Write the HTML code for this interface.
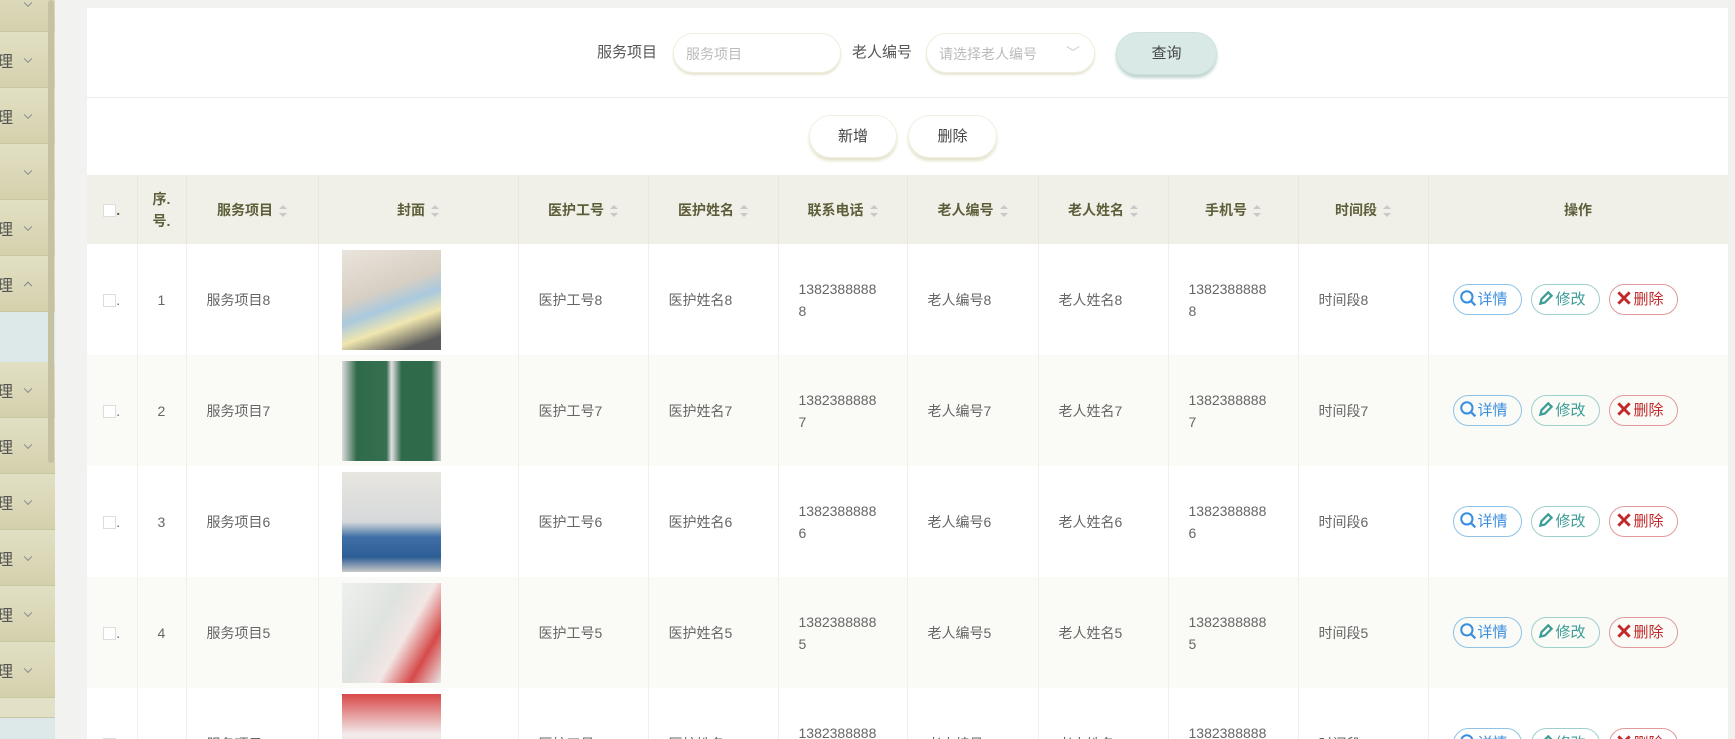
<!DOCTYPE html>
<html><head><meta charset="utf-8"><style>
*{box-sizing:border-box;margin:0;padding:0}
html{width:1735px;height:739px;overflow:hidden}
body{width:1735px;height:739px;overflow:hidden;background:#f2f2f0;font-family:"Liberation Sans","Noto Sans CJK SC",sans-serif;font-size:14px;color:#666;position:relative}
.sb{position:absolute;left:0;top:0;width:55px;height:739px;background:#dcdbbd;overflow:hidden}
.it{position:absolute;left:0;width:55px;background:linear-gradient(#e2e0c4,#d3d1ac);border-bottom:1px solid #c9c7a2;color:#555;font-size:16px}
.it span{position:absolute;left:-3px;top:50%;transform:translateY(-50%)}
.it i{position:absolute;left:25px;top:50%;width:6px;height:6px;border-right:1px solid #888;border-bottom:1px solid #888;transform:translateY(-70%) rotate(45deg)}
.it i.up{transform:translateY(-20%) rotate(225deg)}
.lb{position:absolute;left:0;width:55px;background:#dde9e8}
.panel{position:absolute;left:87px;top:8px;width:1641px;height:731px;background:#fff;overflow:hidden}
.search{height:90px;border-bottom:1px solid #ebebeb;position:relative}
.lbl{position:absolute;top:33px;font-size:15px;color:#555}
.inp{position:absolute;top:25px;height:40px;border-radius:20px;border:1px solid #eeeede;box-shadow:0 2px 2px #e6e4cf;background:#fff;color:#bbb;font-size:14px;padding:10px 12px}
.btn{position:absolute;height:43px;border-radius:22px;background:#fff;border:1px solid #efefe2;box-shadow:0 3px 3px #e5e3cc;text-align:center;line-height:41px;font-size:15px;color:#444}
table{position:absolute;top:167px;left:0;border-collapse:collapse;table-layout:fixed;width:1641px}
th{height:69px;background:#f1f0e8;color:#5e5e3a;font-weight:bold;font-size:14px;border-right:1px solid #e8e7da;text-align:center}
td{height:111px;border-right:1px solid #f0f0ea;padding-left:20px;line-height:22px}
tr.s td{background:#fafaf6}
td.c{padding-left:0;text-align:center}
.ar{display:inline-block;width:8px;height:12px;vertical-align:middle;margin-left:6px;position:relative}
.ar:before,.ar:after{content:"";position:absolute;left:0;border-left:4px solid transparent;border-right:4px solid transparent}
.ar:before{top:0;border-bottom:4px solid #c8c8c8}
.ar:after{bottom:0;border-top:4px solid #c8c8c8}
.cb{display:inline-block;width:13px;height:13px;border:1px solid #ddd;background:#fff;vertical-align:middle}
.img{width:99px;height:100px;margin-left:3px}
td.ops{padding-left:24px}
.ob{display:inline-block;height:31px;width:69px;border-radius:16px;border:1px solid;padding:0 0 0 5px;line-height:29px;font-size:15px;margin-right:9px;vertical-align:middle;white-space:nowrap}
.b1{border-color:#8ec3e6;color:#3a8ee0}.b2{border-color:#9fcfcc;color:#3c9c96}.b3{border-color:#e29a9a;color:#c0282a}
.ob svg{vertical-align:-3px;margin-right:1px}
</style></head><body>
<div class="sb">
<div class="it" style="top:-24px;height:56px"><i></i></div>
<div class="it" style="top:32px;height:56px"><span>理</span><i></i></div>
<div class="it" style="top:88px;height:56px"><span>理</span><i></i></div>
<div class="it" style="top:144px;height:56px"><i></i></div>
<div class="it" style="top:200px;height:56px"><span>理</span><i></i></div>
<div class="it" style="top:256px;height:56px"><span>理</span><i class="up"></i></div>
<div class="lb" style="top:312px;height:50px"></div>
<div class="it" style="top:362px;height:56px"><span>理</span><i></i></div>
<div class="it" style="top:418px;height:56px"><span>理</span><i></i></div>
<div class="it" style="top:474px;height:56px"><span>理</span><i></i></div>
<div class="it" style="top:530px;height:56px"><span>理</span><i></i></div>
<div class="it" style="top:586px;height:56px"><span>理</span><i></i></div>
<div class="it" style="top:642px;height:56px"><span>理</span><i></i></div>
<div class="it" style="top:698px;height:20px;background:#e2e1c8"></div>
<div class="lb" style="top:718px;height:21px"></div>
<div style="position:absolute;left:48px;top:0;width:6px;height:463px;background:#c4c2a2;border-radius:3px"></div>
</div>
<div class="panel">
<div class="search">
<div class="lbl" style="left:510px">服务项目</div>
<div class="inp" style="left:586px;width:168px">服务项目</div>
<div class="lbl" style="left:765px">老人编号</div>
<div class="inp" style="left:839px;width:169px">请选择老人编号<span style="position:absolute;right:14px;top:9px;color:#ccc">﹀</span></div>
<div class="btn" style="left:1029px;top:24px;width:101px;background:#d9e9e6;border-color:#cfe2df;box-shadow:0 3px 3px #bcd3cf">查询</div>
</div>
<div class="btn" style="left:722px;top:107px;width:88px">新增</div>
<div class="btn" style="left:821px;top:107px;width:89px">删除</div>
<table>
<colgroup><col style="width:50px"><col style="width:49px"><col style="width:132px"><col style="width:200px"><col style="width:130px"><col style="width:130px"><col style="width:129px"><col style="width:131px"><col style="width:130px"><col style="width:130px"><col style="width:130px"><col style="width:300px"></colgroup>
<tr><th><span class="cb"></span>.</th><th style="line-height:22px">序.<br>号.</th><th>服务项目<span class="ar"></span></th><th>封面<span class="ar"></span></th><th>医护工号<span class="ar"></span></th><th>医护姓名<span class="ar"></span></th><th>联系电话<span class="ar"></span></th><th>老人编号<span class="ar"></span></th><th>老人姓名<span class="ar"></span></th><th>手机号<span class="ar"></span></th><th>时间段<span class="ar"></span></th><th>操作</th></tr>
<tr><td class="c"><span class="cb"></span>.</td><td>1</td><td>服务项目8</td><td><div class="img" style="background:linear-gradient(160deg,#e9e4dc 0%,#d8cfc3 40%,#a9c9de 55%,#f0e6b0 70%,#5a5a5a 90%)"></div></td><td>医护工号8</td><td>医护姓名8</td><td>1382388888<br>8</td><td>老人编号8</td><td>老人姓名8</td><td>1382388888<br>8</td><td>时间段8</td><td class="ops"></td></tr>
<tr class="s"><td class="c"><span class="cb"></span>.</td><td>2</td><td>服务项目7</td><td><div class="img" style="background:linear-gradient(90deg,#dcdcdc 0%,#2f6a4a 15%,#356f50 45%,#e6e0e6 50%,#2f6a4a 60%,#2f6a4a 90%,#ccc 100%)"></div></td><td>医护工号7</td><td>医护姓名7</td><td>1382388888<br>7</td><td>老人编号7</td><td>老人姓名7</td><td>1382388888<br>7</td><td>时间段7</td><td class="ops"></td></tr>
<tr><td class="c"><span class="cb"></span>.</td><td>3</td><td>服务项目6</td><td><div class="img" style="background:linear-gradient(180deg,#e8e6e0 0%,#d6d8da 50%,#3f6fa6 65%,#2d5d95 85%,#c8c8c8 100%)"></div></td><td>医护工号6</td><td>医护姓名6</td><td>1382388888<br>6</td><td>老人编号6</td><td>老人姓名6</td><td>1382388888<br>6</td><td>时间段6</td><td class="ops"></td></tr>
<tr class="s"><td class="c"><span class="cb"></span>.</td><td>4</td><td>服务项目5</td><td><div class="img" style="background:linear-gradient(120deg,#eef0ee 0%,#dfe3e0 40%,#f2e6e4 60%,#d64a4a 80%,#e8e8e8 100%)"></div></td><td>医护工号5</td><td>医护姓名5</td><td>1382388888<br>5</td><td>老人编号5</td><td>老人姓名5</td><td>1382388888<br>5</td><td>时间段5</td><td class="ops"></td></tr>
<tr><td class="c"><span class="cb"></span>.</td><td>5</td><td>服务项目4</td><td><div class="img" style="background:linear-gradient(180deg,#d84848 0%,#f2eaea 40%,#e6d6d0 100%)"></div></td><td>医护工号4</td><td>医护姓名4</td><td>1382388888<br>4</td><td>老人编号4</td><td>老人姓名4</td><td>1382388888<br>4</td><td>时间段4</td><td class="ops"></td></tr>
</table>
</div>
<div style="position:absolute;left:1728px;top:0;width:7px;height:739px;background:#f0f0ee"></div>
<script>
var h='<span class="ob b1"><svg width="18" height="18" viewBox="0 0 16 16"><circle cx="7" cy="7" r="5" fill="none" stroke="#3a8ee0" stroke-width="1.8"/><path d="M10.5 10.5L14.5 14.5" stroke="#3a8ee0" stroke-width="2"/></svg>详情</span><span class="ob b2"><svg width="18" height="18" viewBox="0 0 16 16"><path d="M3 13l1-4 6-6 3 3-6 6z" fill="none" stroke="#3c9c96" stroke-width="2"/></svg>修改</span><span class="ob b3"><svg width="18" height="18" viewBox="0 0 16 16"><path d="M3 3L13 13M13 3L3 13" stroke="#c0282a" stroke-width="2.6"/></svg>删除</span>';
document.querySelectorAll('.ops').forEach(function(e){e.innerHTML=h});
</script>
</body></html>
